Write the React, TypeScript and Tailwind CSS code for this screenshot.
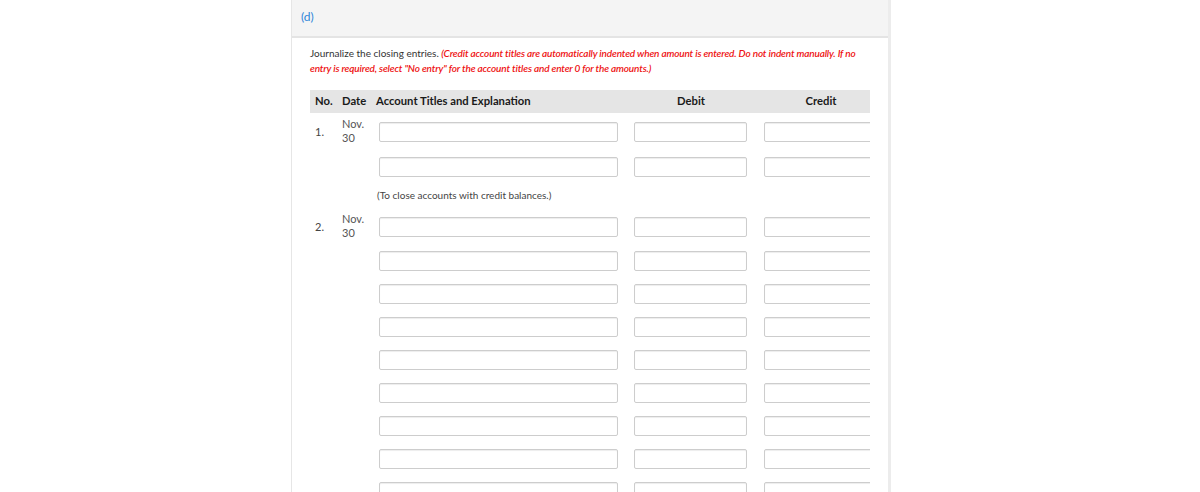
import React from "react";

const inputCls =
  "block h-[20px] rounded-[2px] border border-[#cdcdcd] bg-white shadow-[inset_0_1px_1px_rgba(0,0,0,0.075)]";

function Line({
  no,
  date,
  className = "",
}: {
  no?: string;
  date?: boolean;
  className?: string;
}) {
  return (
    <div className={`flex items-start ${className}`}>
      <div className="w-[28px] shrink-0 pl-[5px] pt-[8px] text-[11px] leading-[14px] text-[#444]">
        {no}
      </div>
      <div className="w-[34px] shrink-0 pl-[4px] text-[11px] leading-[14px] text-[#555]">
        {date && (
          <>
            <div>Nov.</div>
            <div>30</div>
          </>
        )}
      </div>
      <div className="w-[254px] shrink-0 pl-[7px] pt-[5px]">
        <input className={`${inputCls} w-[239px]`} />
      </div>
      <div className="w-[130px] shrink-0 pl-[8px] pt-[5px]">
        <input className={`${inputCls} w-[113px]`} />
      </div>
      <div className="w-[130px] shrink-0 pl-[8px] pt-[5px]">
        <input className={`${inputCls} w-[113px]`} />
      </div>
    </div>
  );
}

export default function App() {
  const extra = [0, 1, 2, 3, 4, 5, 6, 7];
  return (
    <div className="h-[492px] overflow-hidden bg-white font-['Lato','Liberation_Sans',sans-serif]">
      <div className="ml-[291px] h-full w-[600px] border-l border-r-[3px] border-l-[#e6e6e6] border-r-[#ececec]">
        <div className="flex h-[38px] items-center border-b-2 border-[#e4e4e4] bg-[#f4f4f4] pb-[3px] pl-[9px] text-[12px] text-[#2f86d8]">
          (d)
        </div>
        <div className="pl-[18px] pt-[8px]">
          <p className="w-[560px] text-[10px] leading-[15px] text-[#333]">
            Journalize the closing entries.{" "}
            <span className="font-semibold italic tracking-[-0.15px] text-[#ee1111]">
              (Credit account titles are automatically indented when amount is entered. Do not indent manually. If no
              entry is required, select "No entry" for the account titles and enter 0 for the amounts.)
            </span>
          </p>
          <div className="mt-[14px] w-[560px] overflow-hidden">
            <div className="w-[576px]">
              <div className="flex h-[23px] items-center bg-[#e5e5e5] text-[11.25px] font-bold text-[#1a1a1a]">
                <div className="w-[28px] pl-[5px]">No.</div>
                <div className="w-[34px] pl-[4px]">Date</div>
                <div className="w-[254px] pl-[4px]">Account Titles and Explanation</div>
                <div className="w-[130px] text-center">Debit</div>
                <div className="w-[130px] text-center">Credit</div>
              </div>
              <Line no="1." date className="mt-[4px]" />
              <Line className="mt-[7px]" />
              <div className="mt-[11px] pl-[67px] text-[10px] leading-[14px] text-[#444]">
                (To close accounts with credit balances.)
              </div>
              <Line no="2." date className="mt-[10px]" />
              {extra.map((i) => (
                <Line key={i} className={i === 0 ? "mt-[6px]" : "mt-[8px]"} />
              ))}
            </div>
          </div>
        </div>
      </div>
    </div>
  );
}
